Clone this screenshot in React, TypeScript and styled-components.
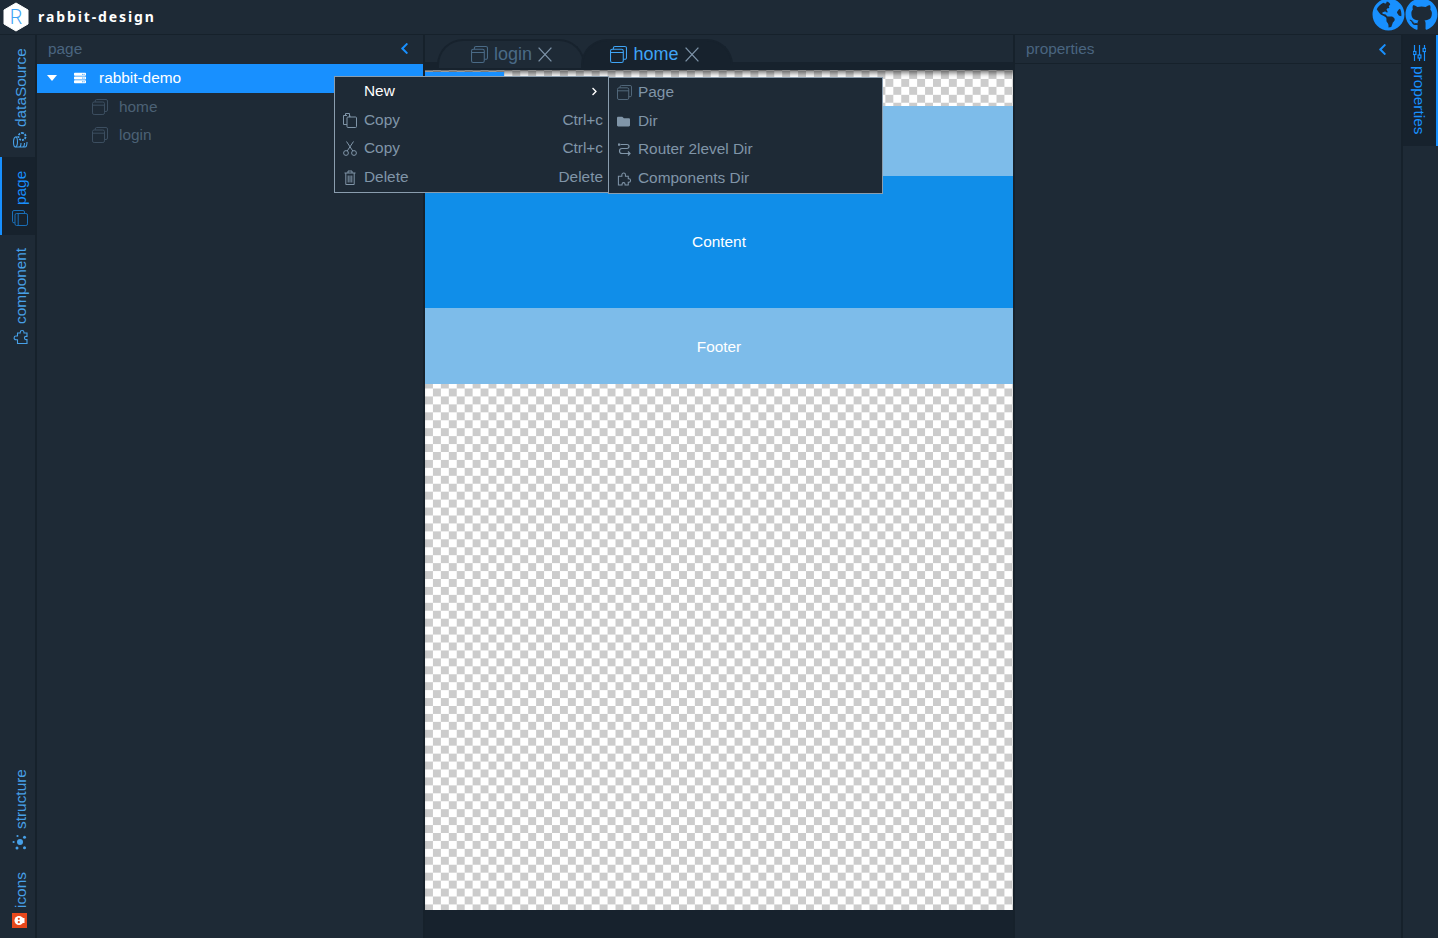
import React from "react";
import styled, { createGlobalStyle } from "styled-components";
import { FaGithub, FaGlobeAmericas, FaServer, FaFolder, FaChevronLeft, FaChevronRight } from "react-icons/fa";

const Global = createGlobalStyle`
  html, body { margin: 0; padding: 0; height: 100%; overflow: hidden; background: #1e2a36; }
  * { box-sizing: border-box; }
  #root { height: 938px; font-family: "Liberation Sans", Arial, sans-serif; }
`;
const Page = styled.div`
  width: 1438px; height: 938px; display: flex; flex-direction: column; background: #1e2a36; position: relative; overflow: hidden;
`;
const Header = styled.header`
  height: 35px; flex: none; display: flex; align-items: center; padding-left: 3px; border-bottom: 1px solid #16212b; background: #1e2a36;
`;
const Brand = styled.span`
  margin: 0 0 2px 9px; font-family: "Noto Sans", sans-serif; font-weight: 700; font-size: 14px; letter-spacing: 1.9px; color: #fff;
`;
const HeaderLinks = styled.div`
  margin: -5px 0 0 auto; display: flex; align-items: center; color: #1890ff; font-size: 33px; height: 34px;
`;
const Main = styled.div`
  flex: 1; display: flex; min-height: 0;
`;
const Rail = styled.nav`
  width: 37px; flex: none; display: flex; flex-direction: column; border-right: 2px solid #16212b;
`;
const RailSpacer = styled.div` flex: 1; `;
const RailItem = styled.div<{ $h: number; $active?: boolean }>`
  width: 35px; height: ${p => p.$h}px; flex: none; writing-mode: vertical-rl; transform: rotate(180deg);
  display: flex; align-items: center; justify-content: flex-start; gap: 5px; padding: 9px 5px 0 0;
  font-size: 15.4px; color: ${p => (p.$active ? "#1890ff" : "#47a0e8")};
  background: ${p => (p.$active ? "#17222d" : "transparent")};
  border-right: 2px solid ${p => (p.$active ? "#1890ff" : "transparent")};
`;
const RailIcon = styled.span<{ $active?: boolean }>`
  display: inline-flex; transform: rotate(90deg); width: 16px; height: 16px; flex: none; margin-left: 2px;
  color: ${p => (p.$active ? "#1a6fb8" : "inherit")};
`;
const Panel = styled.aside`
  width: 388px; flex: none; display: flex; flex-direction: column; border-right: 2px solid #16212b;
`;
const RightPanel = styled(Panel)`
  border-right: none; border-left: 2px solid #16212b;
`;
const PanelHead = styled.div<{ $line?: boolean }>`
  height: 29px; flex: none; display: flex; align-items: center; justify-content: space-between;
  padding: 0 12px ${p => (p.$line ? 0 : 2)}px 11px;
  font-size: 15.4px; color: #4a6580;
  border-bottom: ${p => (p.$line ? "1px solid #16212b" : "none")};
`;
const Chevron = styled.span` display: inline-flex; color: #1890ff; font-size: 13px; `;
const TreeRoot = styled.div`
  height: 29px; display: flex; align-items: center; background: #1890ff; color: #fff; font-size: 15.4px; padding: 0 0 2px 10px;
`;
const Caret = styled.span` display: inline-flex; width: 27px; `;
const ServerIcon = styled.span` display: inline-flex; width: 25px; font-size: 12px; `;
const TreeLeaf = styled.div`
  height: 28px; display: flex; align-items: center; padding-left: 55px; color: #4b6175; font-size: 15.4px; gap: 11px;
  svg { color: #3c4e60; }
`;
const Center = styled.section`
  width: 588px; flex: none; display: flex; flex-direction: column;
`;
const TabBar = styled.div`
  height: 35px; flex: none; display: flex; align-items: flex-end; padding: 0 0 2px 12px;
  background: linear-gradient(#1e2a36 0 27px, #17222d 27px);
`;
const Tab = styled.div<{ $active?: boolean }>`
  width: ${p => (p.$active ? 152 : 148)}px; height: 29px; display: flex; align-items: center; justify-content: center; gap: 6px;
  margin-right: -4px; padding: 0 ${p => (p.$active ? 5 : 0)}px 0 ${p => (p.$active ? 0 : 1)}px; flex: none;
  border: 2px solid #17222d; border-bottom: none; border-radius: 26px 26px 0 0;
  position: relative; z-index: ${p => (p.$active ? 1 : 0)};
  background: ${p => (p.$active ? "#17222d" : "#1e2a36")};
  color: ${p => (p.$active ? "#3fa4f5" : "#4a6a86")}; font-size: 18px;
`;
const CloseX = styled.span`
  display: inline-flex; color: #7d93a8;
`;
const Canvas = styled.div`
  flex: 1; min-height: 0; display: flex; flex-direction: column; background: #17222d;
`;
const Board = styled.div`
  width: 588px; height: 840px; padding-top: 36px; position: relative; display: flex; flex-direction: column;
  background: repeating-conic-gradient(#cccccc 0 25%, #ffffff 0 50%) 0 1px / 15.888px 15.888px;
  box-shadow: inset 0 6px 5px -3px rgba(0,0,0,.55);
`;
const HeaderStrip = styled.div`
  position: absolute; left: 0; top: 2px; width: 79px; height: 34px; background: #1890ff;
`;
const Band = styled.div<{ $h: number; $solid?: boolean }>`
  height: ${p => p.$h}px; display: flex; align-items: center; justify-content: center; font-size: 15.4px; color: #fff;
  padding-top: ${p => (p.$solid ? 0 : 2)}px;
  background: ${p => (p.$solid ? "#108ee9" : "#7dbcea")};
`;
const Menu = styled.div<{ $x: number; $y: number }>`
  position: absolute; left: ${p => p.$x}px; top: ${p => p.$y}px; width: 275px; height: 117px;
  background: #1e2a36; border: 1px solid #8a9dae;
`;
const MenuItem = styled.div<{ $on?: boolean }>`
  height: 29px; display: flex; align-items: flex-start; padding: 5px 5px 0 7px; font-size: 15.4px; line-height: 18px;
  color: ${p => (p.$on ? "#fff" : "#8095a8")};
  &:nth-child(even) { height: 28px; }
`;
const MenuIcon = styled.span<{ $dim?: boolean }>`
  width: 22px; height: 18px; flex: none; display: inline-flex; align-items: center; padding-left: 1px; font-size: 13px;
  color: ${p => (p.$dim ? "#566d80" : "#8095a8")};
`;
const MenuKey = styled.span` margin-left: auto; `;
const SubArrow = styled.span` display: inline-flex; font-size: 9px; color: #fff; margin-right: 4px; `;
const RightRail = styled.nav`
  width: 37px; flex: none; border-left: 2px solid #16212b;
`;
const RightTab = styled.div`
  width: 35px; height: 111px; writing-mode: vertical-rl; display: flex; align-items: center; gap: 5px; padding: 10px 1px 0 0;
  background: #17222d; border-right: 2px solid #1890ff; color: #1890ff; font-size: 15.4px;
`;

const Logo = () => (
  <svg width="26" height="30" viewBox="0 0 26 30">
    <path d="M13 1 L25 8 V22 L13 29 L1 22 V8 Z" fill="#fff" stroke="#fff" strokeLinejoin="round" />
    <text x="13" y="22" textAnchor="middle" fontFamily="Roboto, sans-serif" fontWeight="300" fontSize="20" fill="#3fa4f5">R</text>
  </svg>
);
const WindowIcon = ({ size = 16 }: { size?: number }) => (
  <svg width={size} height={size} viewBox="0 0 16 16" fill="none" stroke="currentColor" strokeWidth="1">
    <rect x="0.5" y="3" width="12" height="12.5" rx="1.6" />
    <path d="M0.5 6.2h12M3.2 3V2A1.5 1.5 0 0 1 4.7.5h9.3A1.5 1.5 0 0 1 15.5 2v9a1.5 1.5 0 0 1-1.5 1.5h-1.5" />
  </svg>
);
const PuzzleIcon = ({ size = 16 }: { size?: number }) => (
  <svg width={size} height={size} viewBox="0 0 16 16" fill="none" stroke="currentColor" strokeWidth="1.1">
    <path d="M1.5 5.5H5.2V4a1.9 1.9 0 1 1 3.8 0v1.5h3v2.7h.6a1.9 1.9 0 1 1 0 3.8H12V15H8.6v-1a1.6 1.6 0 0 0-3.2 0v1H1.5z" />
  </svg>
);
const CloseIcon = () => (
  <svg width="14" height="15" viewBox="0 0 14 15" fill="none" stroke="currentColor" strokeWidth="1.3">
    <path d="M.6.6l12.8 13.8M13.4.6L.6 14.4" />
  </svg>
);
const CaretIcon = () => (
  <svg width="10" height="6" viewBox="0 0 10 6" fill="#fff"><path d="M0 0h10L5 6z" /></svg>
);
const SlidersIcon = () => (
  <svg width="13" height="16" viewBox="0 0 13 16" fill="none" stroke="currentColor" strokeWidth="1.2">
    <path d="M1.5 0v16M6.5 0v16M11.5 0v16" />
    <rect x="0.1" y="6.5" width="2.8" height="3" fill="#17222d" />
    <rect x="5.1" y="10" width="2.8" height="3" fill="#17222d" />
    <rect x="10.1" y="3.5" width="2.8" height="3" fill="#17222d" />
  </svg>
);
const SnippetIcon = () => (
  <svg width="14" height="15" viewBox="0 0 14 15" fill="none" stroke="currentColor" strokeWidth="1">
    <rect x="4" y="4" width="9.5" height="10.5" rx="1" />
    <path d="M4 11.5H.5V2.5H4M6.5 4V.5h-4v2M7 4V2.5" />
  </svg>
);
const ScissorIcon = () => (
  <svg width="14" height="15" viewBox="0 0 14 15" fill="none" stroke="currentColor" strokeWidth="1">
    <circle cx="3" cy="12" r="2.4" /><circle cx="11" cy="12" r="2.4" />
    <path d="M4.2 10L10.5.5M9.8 10L3.5.5" />
  </svg>
);
const TrashIcon = () => (
  <svg width="14" height="15" viewBox="0 0 14 15" fill="none" stroke="currentColor" strokeWidth="1">
    <path d="M1.5 3h11M5 3V1h4v2M2.8 3v11.5h8.4V3M5.2 5.5v7M7 5.5v7M8.8 5.5v7" />
  </svg>
);
const DbIcon = () => (
  <svg width="16" height="16" viewBox="0 0 16 16" fill="none" stroke="currentColor" strokeWidth="1.1">
    <ellipse cx="6" cy="3.5" rx="5" ry="2" />
    <path d="M1 3.5v9.5c0 1.1 2.2 2 5 2M1 7c0 1.1 2 2 4 2M1 10.5c0 1.1 2 2 4 2M11 3.5v2" />
    <circle cx="11.5" cy="10" r="3.6" strokeDasharray="2 1" strokeWidth="1.8" />
  </svg>
);
const StructureIcon = () => (
  <svg width="16" height="16" viewBox="0 0 16 16" fill="currentColor">
    <circle cx="8" cy="8" r="3" />
    <circle cx="8" cy="1.6" r="1.1" /><circle cx="2" cy="5" r="1.5" /><circle cx="14" cy="5.5" r="1.1" />
    <circle cx="2.2" cy="12.5" r="1.5" /><circle cx="12.8" cy="12.5" r="1.5" />
  </svg>
);
const IconsIcon = () => (
  <svg width="15" height="15" viewBox="0 0 15 15">
    <rect width="15" height="15" fill="#e8481c" />
    <circle cx="7.5" cy="7" r="4.5" fill="#fff" />
    <rect x="5" y="10" width="5" height="2.5" fill="#fff" />
    <circle cx="5.8" cy="6.8" r="1.1" fill="#e8481c" /><circle cx="9.2" cy="6.8" r="1.1" fill="#e8481c" />
  </svg>
);
const RouterIcon = () => (
  <svg width="15" height="15" viewBox="0 0 15 15" fill="none" stroke="currentColor" strokeWidth="1.2">
    <rect x="1" y="1.5" width="2.2" height="2.2" fill="currentColor" stroke="none" />
    <path d="M3.5 2.5H10a2 2 0 0 1 0 4H5a2.2 2.2 0 0 0 0 5h8M11 9.5l2 2-2 2" />
  </svg>
);

const App = () => (
  <Page>
    <Global />
    <Header>
      <Logo />
      <Brand>rabbit-design</Brand>
      <HeaderLinks><FaGlobeAmericas /><FaGithub /></HeaderLinks>
    </Header>
    <Main>
      <Rail>
        <RailItem $h={122}><RailIcon><DbIcon /></RailIcon>dataSource</RailItem>
        <RailItem $h={78} $active><RailIcon $active><WindowIcon /></RailIcon>page</RailItem>
        <RailItem $h={119}><RailIcon><PuzzleIcon /></RailIcon>component</RailItem>
        <RailSpacer />
        <RailItem $h={101}><RailIcon><StructureIcon /></RailIcon>structure</RailItem>
        <RailItem $h={79}><RailIcon><IconsIcon /></RailIcon>icons</RailItem>
      </Rail>
      <Panel>
        <PanelHead>page<Chevron><FaChevronLeft /></Chevron></PanelHead>
        <TreeRoot>
          <Caret><CaretIcon /></Caret>
          <ServerIcon><FaServer /></ServerIcon>
          rabbit-demo
        </TreeRoot>
        <TreeLeaf><WindowIcon />home</TreeLeaf>
        <TreeLeaf><WindowIcon />login</TreeLeaf>
      </Panel>
      <Center>
        <TabBar>
          <Tab><WindowIcon size={17} />login<CloseX><CloseIcon /></CloseX></Tab>
          <Tab $active><WindowIcon size={17} />home<CloseX><CloseIcon /></CloseX></Tab>
        </TabBar>
        <Canvas>
          <Board>
            <HeaderStrip />
            <Band $h={70} />
            <Band $h={132} $solid>Content</Band>
            <Band $h={76}>Footer</Band>
          </Board>
        </Canvas>
      </Center>
      <RightPanel>
        <PanelHead $line>properties<Chevron><FaChevronLeft /></Chevron></PanelHead>
      </RightPanel>
      <RightRail>
        <RightTab><SlidersIcon />properties</RightTab>
      </RightRail>
    </Main>
    <Menu $x={334} $y={76}>
      <MenuItem $on><MenuIcon />New<MenuKey><SubArrow><FaChevronRight /></SubArrow></MenuKey></MenuItem>
      <MenuItem><MenuIcon><SnippetIcon /></MenuIcon>Copy<MenuKey>Ctrl+c</MenuKey></MenuItem>
      <MenuItem><MenuIcon><ScissorIcon /></MenuIcon>Copy<MenuKey>Ctrl+c</MenuKey></MenuItem>
      <MenuItem><MenuIcon><TrashIcon /></MenuIcon>Delete<MenuKey>Delete</MenuKey></MenuItem>
    </Menu>
    <Menu $x={608} $y={77}>
      <MenuItem><MenuIcon $dim><WindowIcon size={15} /></MenuIcon>Page</MenuItem>
      <MenuItem><MenuIcon><FaFolder /></MenuIcon>Dir</MenuItem>
      <MenuItem><MenuIcon><RouterIcon /></MenuIcon>Router 2level Dir</MenuItem>
      <MenuItem><MenuIcon><PuzzleIcon size={15} /></MenuIcon>Components Dir</MenuItem>
    </Menu>
  </Page>
);

export default App;
